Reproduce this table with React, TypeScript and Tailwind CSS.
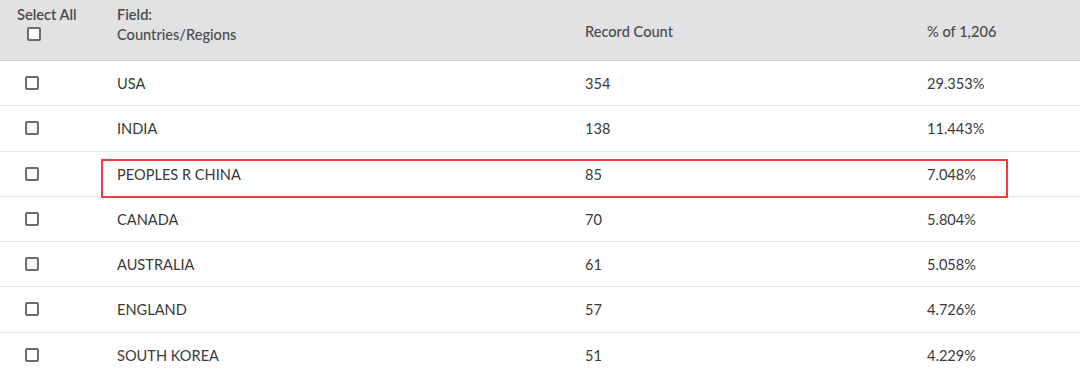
const rows = [
  { name: "USA", count: "354", pct: "29.353%" },
  { name: "INDIA", count: "138", pct: "11.443%" },
  { name: "PEOPLES R CHINA", count: "85", pct: "7.048%" },
  { name: "CANADA", count: "70", pct: "5.804%" },
  { name: "AUSTRALIA", count: "61", pct: "5.058%" },
  { name: "ENGLAND", count: "57", pct: "4.726%" },
  { name: "SOUTH KOREA", count: "51", pct: "4.229%" },
];

function Box() {
  return <span className="block w-[14px] h-[14px] border-2 border-[#6b6b6b] rounded-[2px] bg-white" />;
}

export default function App() {
  return (
    <div className="w-[1080px] h-[374px] bg-white overflow-hidden text-[14.6px] text-[#3a3a3a] font-['Lato','Open_Sans',sans-serif]">
      <div className="relative">
        <div className="grid grid-cols-[117px_468px_342px_1fr] h-[61px] bg-[#e2e2e4] border-b border-[#cfcfd2] text-[#4a4a4a]">
          <div className="flex flex-col items-start pl-[17px] pt-[5px]">
            <span className="font-semibold leading-[19px]">Select All</span>
            <span className="mt-[3px] ml-[10px]">
              <Box />
            </span>
          </div>
          <div className="flex flex-col pt-[5px]">
            <span className="font-semibold leading-[19px]">Field:</span>
            <span className="leading-[21px] font-medium">Countries/Regions</span>
          </div>
          <div className="flex items-end pb-[17px] font-medium">Record Count</div>
          <div className="flex items-end pb-[17px] font-medium">% of 1,206</div>
        </div>
        {rows.map((r) => (
          <div
            key={r.name}
            className="grid grid-cols-[117px_468px_342px_1fr] h-[45.25px] items-center border-b border-[#e6e6e8]"
          >
            <div className="pl-[25px]">
              <Box />
            </div>
            <div className="pt-[2px]">{r.name}</div>
            <div className="pt-[2px]">{r.count}</div>
            <div className="pt-[2px]">{r.pct}</div>
          </div>
        ))}
        <div className="absolute left-[101px] top-[159px] w-[907px] h-[39px] border-[2.5px] border-[#f03a3c] pointer-events-none" />
      </div>
    </div>
  );
}
